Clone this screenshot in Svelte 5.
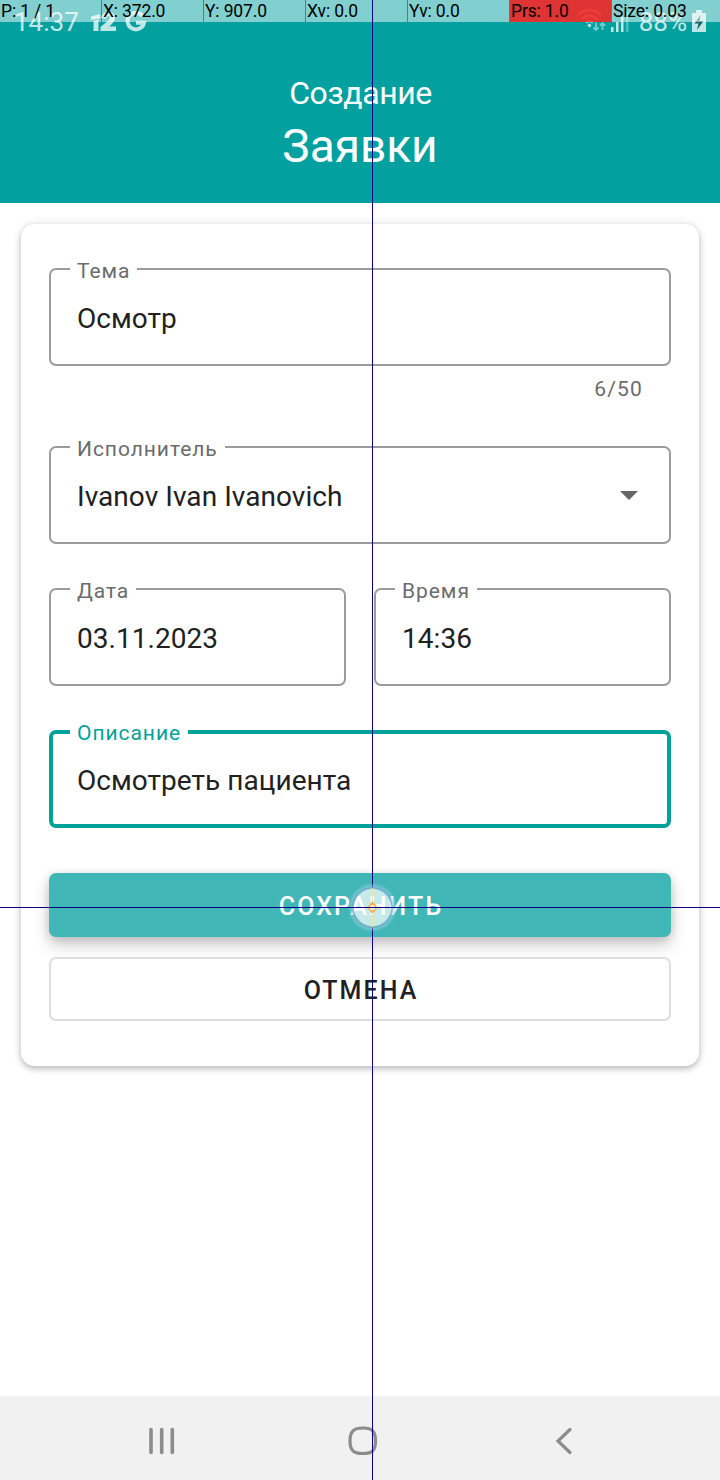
<script>
  const stats = [
    'P: 1 / 1',
    'X: 372.0',
    'Y: 907.0',
    'Xv: 0.0',
    'Yv: 0.0',
    'Prs: 1.0',
    'Size: 0.03'
  ];
</script>

{#snippet field(label, value, cls = '', arrow = false)}
  <div class="field {cls}">
    <span class="label">{label}</span>
    <span class="value">{value}</span>
    {#if arrow}
      <svg class="arrow" width="18" height="9" viewBox="0 0 18 9"><path d="M0 0H18L9 9Z" fill="#666" /></svg>
    {/if}
  </div>
{/snippet}

<div class="screen">
  <header>
    <div class="status">
      <span class="clock">14:37</span>
      <svg class="tele" width="26" height="20" viewBox="0 0 26 20" fill="#fff">
        <path d="M0 4.500L9 2V6.500L0 8ZM2.500 9L7.500 7.500V19H2.500Z" />
        <path d="M10 6C11 2 14 0 17.500 0C22 0 24 2.500 24 6C24 9 22 11 18.500 14.500H25V19H9.500V15L16 9.500C18 7.500 19 6.500 19 5.500C19 3.500 15.500 3.500 15 6.500Z" />
      </svg>
      <svg class="google" width="22" height="22" viewBox="0 0 22 22" fill="none" stroke="#fff" stroke-width="4"><path d="M17.500 5A8.300 8.300 0 1 0 19 11.800H11" /></svg>
      <span class="space"></span>
      <svg class="wifi" width="30" height="24" viewBox="0 0 30 24" fill="none" stroke="#fff">
        <g stroke-width="2.500" opacity=".8"><path d="M1 7Q12.500 -3 24 7M5 11Q12.500 4 20 11M9 14.500Q12.500 11.500 16 14.500" /></g>
        <circle cx="12.500" cy="17.500" r="1.700" fill="#fff" stroke="none" />
        <path d="M19 14.500V22M16.500 19.500L19 22L21.500 19.500M25.500 22V15M23 17.500L25.500 15L28 17.500" stroke-width="1.800" opacity=".6" />
      </svg>
      <svg class="signal" width="20" height="20" viewBox="0 0 20 20" fill="#fff"><path d="M0 15H2.500V20H0ZM5 10H7.500V20H5ZM10 5H12.500V20H10Z" /><path d="M15 0H17.500V20H15Z" opacity=".4" /></svg>
      <span class="pct">88%</span>
      <svg class="battery" width="14" height="22" viewBox="0 0 14 22"><path d="M4 0H10V3H14V22H0V3H4Z" fill="#fff" /><path d="M8.500 5L2.500 13.500H6.500L5 20L11.500 11H7.500Z" fill="#1d4f52" /></svg>
    </div>
    <div class="subtitle">Создание</div>
    <div class="title">Заявки</div>
  </header>

  <main>
    <section class="card">
      {@render field('Тема', 'Осмотр')}
      <div class="counter">6/50</div>
      {@render field('Исполнитель', 'Ivanov Ivan Ivanovich', '', true)}
      <div class="pair">
        {@render field('Дата', '03.11.2023')}
        {@render field('Время', '14:36')}
      </div>
      {@render field('Описание', 'Осмотреть пациента', 'active')}
      <button class="save">СОХРАНИТЬ</button>
      <button class="cancel">ОТМЕНА</button>
    </section>
  </main>

  <nav>
    <svg width="26" height="28" viewBox="0 0 26 28" stroke="#8c8c8c" stroke-width="3.600" stroke-linecap="round"><path d="M2 2.500V25.500M12.700 2.500V25.500M23.300 2.500V25.500" /></svg>
    <svg class="home" width="30" height="30" viewBox="0 0 30 30" fill="none" stroke="#8c8c8c" stroke-width="3.200"><path d="M15 2C24 2 27.500 5 27.500 15S24 27.500 15 27.500S2 25 2 15S6 2 15 2Z" /></svg>
    <svg width="18" height="28" viewBox="0 0 18 28" fill="none" stroke="#8c8c8c" stroke-width="3.200" stroke-linecap="round"><path d="M15 2.500L3 14L15 25.500" /></svg>
  </nav>

  <div class="stats">
    {#each stats as s, i}
      <span class:hot={i === 5}>{s}</span>
    {/each}
  </div>
  <div class="vline"></div>
  <div class="touch">
    <svg width="51" height="51" viewBox="0 0 51 51" fill="none">
      <path d="M25.500 6V45" stroke="#f0e6a8" stroke-width="1" />
      <circle cx="25.500" cy="25.500" r="3.500" stroke="#f0b45a" stroke-width="1.800" fill="#fff3d5" />
      <path d="M25.500 19L28 22H23ZM25.500 32L28 29H23Z" fill="#f0b45a" />
    </svg>
  </div>
  <div class="hline"></div>
</div>

<style>
  :global(body) { margin: 0; background: #fff; }
  .screen {
    position: relative;
    width: 720px;
    height: 1480px;
    display: flex;
    flex-direction: column;
    overflow: hidden;
    background: #fff;
    font-family: Roboto, "Liberation Sans", sans-serif;
    color: #212121;
  }
  header {
    height: 203px;
    background: #02a19f;
    color: #fff;
    text-align: center;
    box-sizing: border-box;
  }
  .status {
    display: flex;
    height: 44px;
    align-items: center;
    padding: 0 14px 0 14px;
    opacity: .75;
    box-sizing: border-box;
  }
  .clock, .pct { font-size: 26px; line-height: 44px; height: 44px; }
  .tele { margin: 0 0 0 12px; }
  .google { margin: 0 0 0 8px; }
  .space { flex: 1; }
  .wifi { margin: -5px 4px 0 0; }
  .signal { margin-right: 8px; }
  .pct { margin-right: 5px; }
  .battery { margin-top: -2px; }
  .subtitle { margin-top: 30px; font-size: 32px; line-height: 38px; letter-spacing: -.4px; text-indent: 1px; }
  .title { margin-top: 7px; font-size: 46px; line-height: 54px; }
  main { flex: 1; padding: 21px 21px 0; }
  .card {
    display: flex;
    flex-direction: column;
    padding: 44px 28px 45px;
    border-radius: 14px;
    box-shadow: 0 3px 6px rgba(0,0,0,.22), 0 0 10px rgba(0,0,0,.1);
  }
  .field {
    position: relative;
    flex: 1 1 0;
    display: flex;
    align-items: center;
    justify-content: space-between;
    min-height: 98px;
    box-sizing: border-box;
    border: 2px solid #9b9b9b;
    border-radius: 7px;
    padding: 4px 31px 0 26px;
  }
  .label {
    position: absolute;
    left: 19px;
    top: -12px;
    padding: 0 7px;
    background: #fff;
    color: #6b6b6b;
    font-size: 21px;
    line-height: 26px;
    letter-spacing: .95px;
    white-space: nowrap;
  }
  .value { font-size: 28px; line-height: 34px; letter-spacing: .05px; white-space: nowrap; }
  .arrow { margin-top: -3px; }
  .counter {
    height: 80px;
    padding: 10px 28px 0 0;
    box-sizing: border-box;
    text-align: right;
    font-size: 21px;
    line-height: 26px;
    letter-spacing: 1.200px;
    color: #6b6b6b;
  }
  .pair { display: flex; gap: 28px; margin: 44px 0; }
  .active { border: 4px solid #02a19a; padding: 4px 29px 0 24px; }
  .active .label { color: #02a19a; left: 17px; top: -14px; }
  button {
    display: block;
    height: 64px;
    padding: 4px 0 0 2px;
    border: 0;
    border-radius: 7px;
    box-sizing: border-box;
    font-family: inherit;
    font-size: 25px;
    font-weight: 500;
    line-height: 30px;
    letter-spacing: 2.050px;
    color: #212121;
  }
  .save {
    position: relative;
    margin-top: 45px;
    background: #40b7b6;
    color: #fff;
    box-shadow: 0 8px 16px rgba(0,0,0,.2), 0 2px 10px rgba(0,0,0,.12);
  }
  .cancel { position: relative; margin-top: 20px; background: transparent; border: 2px solid #dedede; }
  nav {
    height: 84px;
    display: flex;
    align-items: center;
    justify-content: space-between;
    padding: 5px 147px 0 149px;
    box-sizing: border-box;
    background: #f1f1f1;
  }
  .home { margin-right: 4px; }
  .stats {
    position: absolute;
    top: 0;
    left: 0;
    display: grid;
    grid-template-columns: 101px repeat(5, 101px) 109px;
    column-gap: 1px;
    width: 720px;
    height: 22px;
    color: #000;
    font-size: 17.500px;
    line-height: 22px;
    letter-spacing: -.15px;
  }
  .stats span { background: rgba(255,255,255,.5); padding-left: 1px; white-space: nowrap; }
  .stats .hot { background: rgba(255,37,37,.876); }
  .vline { position: absolute; left: 372px; top: 0; width: 1px; height: 1480px; background: #0b0080; }
  .hline { position: absolute; left: 0; top: 907px; width: 720px; height: 1px; background: #0b0080; }
  .touch { position: absolute; left: 347px; top: 882px; width: 51px; height: 51px; border-radius: 50%; background: radial-gradient(circle, rgba(255,255,255,.7) 0 18px, rgba(110,165,205,.9) 19.500px, rgba(160,210,225,.5) 21px, transparent 25px); }
  .touch svg { display: block; }
</style>
